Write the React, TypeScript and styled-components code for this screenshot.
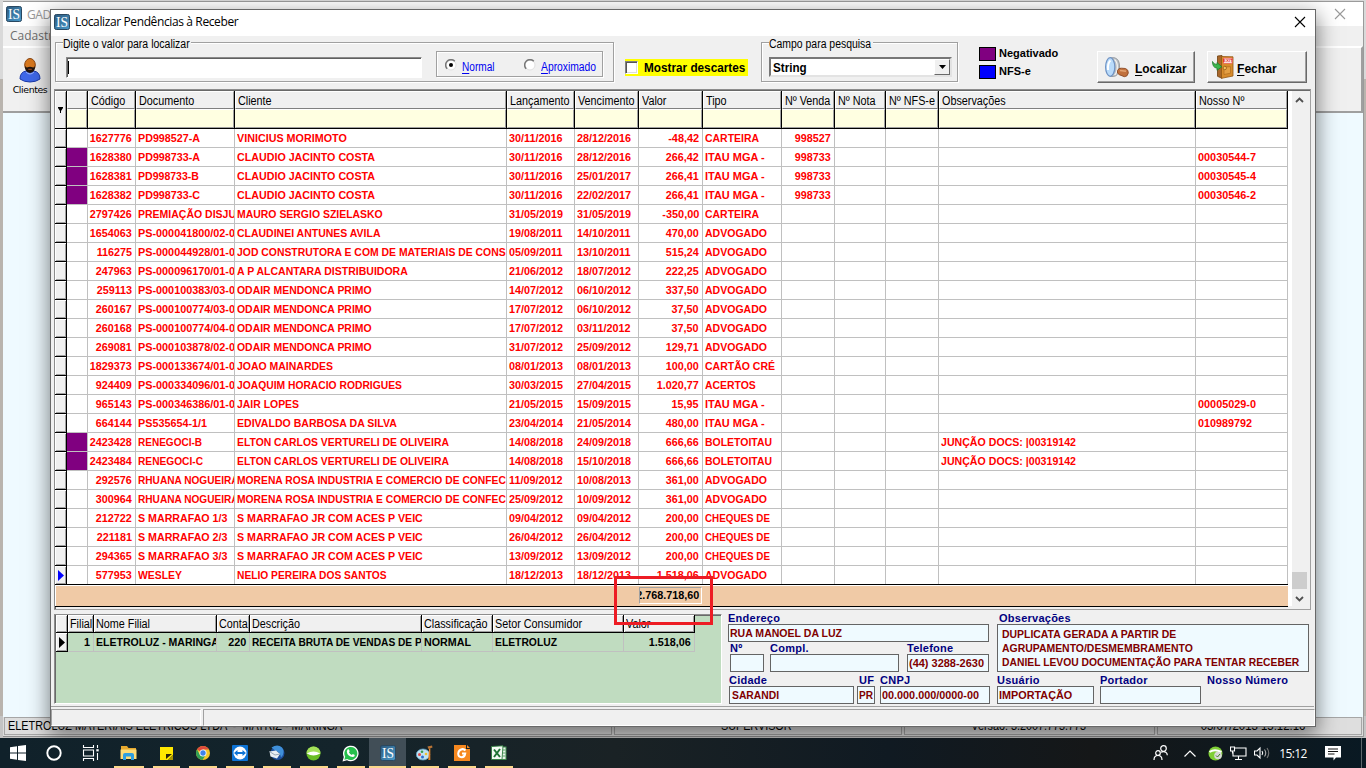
import React from "react";
import styled, { createGlobalStyle, css } from "styled-components";

const Global = createGlobalStyle`
  * { box-sizing: border-box; }
  body { margin: 0; background: #b7b3ad; overflow: hidden; }
  #root { font-family: "Liberation Sans", Arial, sans-serif; font-size: 11px; color: #000; }
`;

const Desktop = styled.div`
  position: relative;
  width: 1366px;
  height: 768px;
  overflow: hidden;
  background: linear-gradient(#d9d9d9 0 79px, #b9b4ae 79px 716px, #c4c4c4 716px);
`;

/* ---------- shared text ---------- */
const Narrow = styled.span<{ $sx?: number }>`
  display: inline-block;
  font-size: 12px;
  white-space: pre;
  transform: scaleX(${(p) => p.$sx ?? 0.9});
  transform-origin: 0 50%;
`;
const Under = styled.u`
  text-decoration: underline;
  text-underline-offset: 2px;
`;

/* ---------- main window ---------- */
const MainWindow = styled.div`
  position: absolute;
  left: 3px;
  top: 1px;
  width: 1361px;
  height: 736px;
  display: flex;
  flex-direction: column;
  background: #effaff;
  border-top: 1px solid #9b9b9b;
  border-right: 1px solid #9a9a9a;
`;
const MainTitle = styled.div`
  height: 24px;
  flex: none;
  display: flex;
  align-items: center;
  padding: 0 17px 0 3px;
  gap: 5px;
  background: #fff;
  color: #999;
  font-family: "Open Sans", "Noto Sans", sans-serif;
  font-size: 12px;
  letter-spacing: -0.38px;
  white-space: pre;
  & > :last-child { margin-left: auto; }
`;
const MainMenu = styled.div`
  height: 20px;
  flex: none;
  padding: 0 7px;
  font: 12px/20px "Open Sans", "Noto Sans", sans-serif;
  color: #6d6d6d;
  background: #f0f0f0;
`;
const MainToolbar = styled.div`
  height: 67px;
  flex: none;
  border-top: 2px solid #fff;
  border-bottom: 2px solid #9f9f9f;
  border-right: 2px solid #9f9f9f;
  background: #f0f0f0;
`;
const ToolItem = styled.div`
  width: 54px;
  display: flex;
  flex-direction: column;
  align-items: center;
  padding-top: 9px;
  font: 9.4px/13px "DejaVu Sans", sans-serif;
  letter-spacing: -0.4px;
  svg { display: block; margin-bottom: 0; }
`;
const MainStatus = styled.div`
  height: 20px;
  flex: none;
  margin-top: auto;
  display: flex;
  gap: 2px;
  padding: 0 1px 0 1px;
  background: #dcdcdc;
  border-bottom: 1px solid #8f8f8f;
`;
const MainPane = styled.div<{ $w: number; $left?: boolean; $pr?: number }>`
  width: ${(p) => p.$w}px;
  flex: none;
  border: 1px solid #a6a6a6;
  height: 18px;
  font-size: 12px;
  line-height: 17px;
  padding-left: 3px;
  padding-right: ${(p) => p.$pr ?? 0}px;
  text-align: ${(p) => (p.$left ? "left" : "center")};
  white-space: pre;
  background: #dedede;
  span { transform-origin: ${(p) => (p.$left ? "0 50%" : "50% 50%")}; }
`;

/* ---------- dialog ---------- */
const Dialog = styled.div`
  position: absolute;
  left: 50px;
  top: 9px;
  width: 1266px;
  height: 718px;
  border: 1px solid #686868;
  background: #f0f0f0;
  box-shadow: 0 7px 20px 1px rgba(0, 0, 0, 0.5);
  display: flex;
  flex-direction: column;
`;
const DialogTitle = styled.div`
  height: 26px;
  flex: none;
  background: #fff;
  display: flex;
  align-items: center;
  padding: 0 9px 3px 3px;
  gap: 5px;
  font: 12px "Open Sans", "Noto Sans", sans-serif;
  letter-spacing: -0.38px;
  & > svg:last-child { margin-left: auto; }
`;
const SearchBar = styled.div`
  height: 53px;
  flex: none;
  display: flex;
  align-items: flex-start;
  padding: 6px 0 0 4px;
`;
const Group = styled.div<{ $w: number; $gap: number }>`
  position: relative;
  width: ${(p) => p.$w}px;
  flex: none;
  height: 40px;
  margin-right: ${(p) => p.$gap}px;
  border: 1px solid #a0a0a0;
  box-shadow: 1px 1px 0 #fff, inset 1px 1px 0 #fff;
  display: flex;
  align-items: flex-start;
  padding: 14px 0 0 ${(p) => (p.$w > 300 ? 10 : 7)}px;
`;
const Legend = styled.div<{ $w: number }>`
  position: absolute;
  left: 7px;
  top: -6px;
  width: ${(p) => p.$w}px;
  height: 14px;
  line-height: 14px;
  background: #f0f0f0;
  white-space: nowrap;
`;
const TextBox = styled.div`
  width: 356px;
  flex: none;
  height: 21px;
  background: #fff;
  border: 1px solid;
  border-color: #8a8a8a #fff #fff #8a8a8a;
  box-shadow: inset 1px 1px 0 #606060;
  padding: 3px 0 0 1px;
`;
const Caret = styled.div`
  width: 1px;
  height: 13px;
  background: #000;
`;
const RadioGroup = styled.div`
  width: 167px;
  flex: none;
  height: 26px;
  margin: -6px 0 0 14px;
  border: 1px solid #a0a0a0;
  box-shadow: 1px 1px 0 #fff, inset 1px 1px 0 #fff;
  display: flex;
  align-items: center;
  padding: 5px 0 0 8px;
  color: #0000f0;
`;
const RadioItem = styled.div<{ $w: number }>`
  width: ${(p) => p.$w}px;
  flex: none;
  display: flex;
  align-items: center;
  gap: 5px;
  white-space: nowrap;
  svg { margin-top: -3px; flex: none; }
`;
const CheckItem = styled.div`
  width: 123px;
  height: 17px;
  flex: none;
  margin: 17px 13px 0 0;
  background: #ffff00;
  display: flex;
  align-items: center;
  gap: 6px;
  font-weight: bold;
`;
const CheckBox = styled.div`
  width: 13px;
  height: 13px;
  flex: none;
  background: #fff;
  border: 1px solid;
  border-color: #808080 #fff #fff #808080;
  box-shadow: inset 1px 1px 0 #555, inset -1px -1px 0 #ddd;
`;
const Select = styled.div`
  width: 183px;
  flex: none;
  height: 20px;
  background: #fff;
  border: 2px solid;
  border-color: #777 #e3e3e3 #e3e3e3 #777;
  display: flex;
  align-items: center;
  justify-content: space-between;
  padding-left: 2px;
  font-weight: bold;
  span { margin-top: 2px; }
`;
const DropButton = styled.div`
  width: 16px;
  height: 16px;
  background: #f0f0f0;
  border: 1px solid;
  border-color: #fff #696969 #696969 #fff;
  display: grid;
  place-items: center;
`;
const ColorLegend = styled.div`
  width: 118px;
  flex: none;
  padding-top: 4px;
  display: flex;
  flex-direction: column;
  gap: 5px;
`;
const ColorItem = styled.div<{ $c: string }>`
  height: 13px;
  display: flex;
  align-items: center;
  gap: 3px;
  font-weight: bold;
  line-height: 12px;
  &::before {
    content: "";
    width: 15px;
    height: 12px;
    margin-top: 2px;
    border: 1px solid #000;
    background: ${(p) => p.$c};
  }
`;
const ActionButton = styled.div<{ $w: number; $pl: number; $gap: number }>`
  width: ${(p) => p.$w}px;
  height: 32px;
  margin: 9px ${(p) => 110 - p.$w}px 0 0;
  flex: none;
  border: 1px solid;
  border-color: #fff #696969 #696969 #fff;
  box-shadow: inset -1px -1px 0 #a0a0a0;
  display: flex;
  align-items: center;
  padding-left: ${(p) => p.$pl}px;
  gap: ${(p) => p.$gap}px;
  font-weight: bold;
  span { font-size: 13px; margin-top: 2px; }
`;

/* ---------- grids ---------- */
const GridPanel = styled.div`
  height: 521px;
  flex: none;
  margin: 0 4px 0 3px;
  border: 1px solid #8d8d8d;
  border-right-color: #a0a0a0;
  box-shadow: inset 1px 1px 0 #696969;
  display: flex;
  padding: 1px 3px 3px 0;
  border-bottom-color: #a0a0a0;
`;
const GridMain = styled.div`
  width: 1233px;
  flex: none;
  display: flex;
  flex-direction: column;
`;
const HeadRow = styled.div`
  display: flex;
  height: 38px;
  flex: none;
  border-bottom: 1px solid #000;
`;
const HeadCell = styled.div<{ $w: number }>`
  width: ${(p) => p.$w}px;
  flex: none;
  border-right: 1px solid #000;
  display: flex;
  flex-direction: column;
`;
const HeadText = styled.div`
  height: 18px;
  flex: none;
  overflow: hidden;
  padding-left: 2px;
  line-height: 18px;
  background: #f0f0f0;
  border: 1px solid;
  border-color: #fff #a0a0a0 #808080 #fff;
  span { line-height: 18px; }
`;
const FilterBox = styled.div`
  flex: 1;
  background: #ffffe1;
  border: 1px solid;
  border-color: #fff #a0a0a0 #a0a0a0 #ffffe1;
`;
const FilterHandle = styled.div`
  width: 12px;
  flex: none;
  border-right: 1px solid #000;
  display: grid;
  place-items: center;
  background: #f0f0f0;
  box-shadow: inset 1px 1px 0 #fff, inset -1px 0 0 #a0a0a0;
`;
const Row = styled.div<{ $c: string; $last?: boolean }>`
  display: flex;
  height: ${(p) => (p.$last ? 18 : 19)}px;
  flex: none;
  color: ${(p) => p.$c};
  font-weight: bold;
`;
const RowMark = styled.div<{ $last?: boolean }>`
  width: 12px;
  flex: none;
  background: #f0f0f0;
  border-right: 1px solid #000;
  border-bottom: ${(p) => (p.$last ? 0 : 1)}px solid #000;
  box-shadow: inset 1px 1px 0 #fff, inset -1px -1px 0 #a0a0a0;
  display: grid;
  place-items: center;
`;
const Cell = styled.div<{ $w: number; $right?: boolean; $fill?: string; $last?: boolean }>`
  width: ${(p) => p.$w}px;
  flex: none;
  overflow: hidden;
  white-space: pre;
  line-height: 18px;
  padding: 0 ${(p) => (p.$right ? 3 : 0)}px 0 2px;
  display: flex;
  justify-content: ${(p) => (p.$right ? "flex-end" : "flex-start")};
  background: ${(p) => p.$fill ?? "#fff"};
  border-right: 1px solid #c0c0c0;
  border-bottom: ${(p) => (p.$last ? 0 : 1)}px solid #c0c0c0;
`;
const GridFooter = styled.div`
  height: 23px;
  flex: none;
  border-top: 1px solid #000;
  border-bottom: 1px solid #000;
  background: #f0caa6;
  box-shadow: inset 1px 1px 0 #fff;
  padding: 2px 0 0 584px;
`;
const Total = styled.div`
  width: 63px;
  height: 17px;
  border: 1px solid;
  border-color: #a0a0a0 #fff #fff #a0a0a0;
  overflow: hidden;
  display: flex;
  justify-content: flex-end;
  padding-right: 2px;
  font-weight: bold;
  line-height: 15px;
`;
const GridGap = styled.div`
  width: 4px;
  background: #fff;
`;
const ScrollBar = styled.div`
  width: 16px;
  display: flex;
  flex-direction: column;
  align-items: center;
  padding: 6px 0 4px;
  background: #f0f0f0;
`;
const Thumb = styled.div`
  width: 15px;
  height: 17px;
  margin: auto 0 7px;
  background: #cdcdcd;
`;

/* ---------- lower half ---------- */
const Lower = styled.div`
  height: 97px;
  flex: none;
  margin-right: 1px;
  border-bottom: 1px solid #a0a0a0;
  display: flex;
  padding: 4px 0 0 3px;
`;
const DetailGrid = styled.div`
  width: 668px;
  height: 90px;
  flex: none;
  background: #c0dcc0;
  border: 1px solid;
  border-color: #8d8d8d #fff #fff #8d8d8d;
  box-shadow: inset 1px 1px 0 #696969;
  padding: 0 0 0 1px;
`;
const DetailHead = styled.div`
  display: flex;
  height: 18px;
`;
const DetailHeadCell = styled.div<{ $w: number }>`
  width: ${(p) => p.$w}px;
  flex: none;
  height: 18px;
  overflow: hidden;
  line-height: 18px;
  padding-left: 2px;
  background: #f0f0f0;
  border-right: 1px solid #000;
  border-bottom: 1px solid #000;
  box-shadow: inset 1px 1px 0 #fff, inset -1px -1px 0 #a0a0a0;
`;
const Form = styled.div`
  flex: 1;
  display: flex;
  margin-top: -1px;
  padding: 0 0 0 6px;
`;
const FormLeft = styled.div`
  width: 269px;
  flex: none;
`;
const FormRight = styled.div`
  flex: 1;
`;
const FieldRow = styled.div<{ $h: number; $pl?: number }>`
  height: ${(p) => p.$h}px;
  display: flex;
  padding-left: ${(p) => p.$pl ?? 0}px;
`;
const Field = styled.div<{ $w: number; $gap?: number }>`
  width: ${(p) => p.$w}px;
  margin-right: ${(p) => p.$gap ?? 0}px;
  flex: none;
`;
const FieldLabel = styled.div<{ $pl?: number }>`
  height: 11px;
  line-height: 11px;
  padding-left: ${(p) => p.$pl ?? 0}px;
  color: #000080;
  font-weight: bold;
  letter-spacing: 0.25px;
  white-space: nowrap;
`;
const FieldBox = styled.div<{ $h?: number; $pl?: number }>`
  height: ${(p) => p.$h ?? 18}px;
  border: 1px solid #646464;
  background: #effaff;
  color: #800000;
  font-weight: bold;
  padding: ${(p) => (p.$h ? 2 : 1)}px 0 0 ${(p) => p.$pl ?? 1}px;
  line-height: 14px;
  white-space: pre;
  overflow: hidden;
`;
const Fit = styled.span<{ $sx: number; $right?: boolean }>`
  display: block;
  flex: none;
  width: max-content;
  transform: scaleX(${(p) => p.$sx});
  transform-origin: ${(p) => (p.$right ? "100%" : "0")} 50%;
`;
const DialogStatus = styled.div`
  flex: 1;
  display: flex;
  gap: 2px;
  padding-top: 2px;
`;
const StatusPane = styled.div<{ $w?: number }>`
  ${(p) => (p.$w ? css`width: ${p.$w}px;` : css`flex: 1;`)}
  border: 1px solid;
  border-color: #a0a0a0 #fff #fff #a0a0a0;
`;
const Highlight = styled.div`
  position: absolute;
  left: 614px;
  top: 576px;
  width: 99px;
  height: 49px;
  border: 3px solid #ed1c24;
`;

/* ---------- taskbar ---------- */
const Taskbar = styled.div`
  position: absolute;
  left: 0;
  right: 0;
  bottom: 0;
  height: 30px;
  display: flex;
  background: linear-gradient(90deg, #10212a, #14242b 25%, #1a2225 45%, #101a22 65%, #151718 80%, #091923);
`;
const Task = styled.div<{ $w: number; $open?: boolean; $active?: boolean }>`
  width: ${(p) => p.$w}px;
  flex: none;
  display: grid;
  place-items: center;
  background: ${(p) => (p.$active ? "#414e57" : "none")};
  position: relative;
  ${(p) =>
    p.$open &&
    css`
      &::after {
        content: "";
        position: absolute;
        bottom: 0;
        left: ${p.$active ? 0 : 5}px;
        right: ${p.$active ? 0 : 4}px;
        height: 2px;
        background: #fbd88b;
      }
    `}
`;
const Tray = styled.div`
  margin-left: auto;
  display: flex;
  align-items: center;
  color: #fff;
  svg { flex: none; }
`;
const TrayItem = styled.div<{ $w: number }>`
  width: ${(p) => p.$w}px;
  height: 30px;
  display: grid;
  place-items: center;
`;
const Clock = styled.div`
  width: 40px;
  text-align: center;
  font: 12px "Open Sans", sans-serif;
  letter-spacing: -0.65px;
`;
const PeekLine = styled.div`
  width: 5px;
  height: 30px;
  border-left: 1px solid #5c676c;
`;

/* ---------- drawings ---------- */
const AppIcon = ({ size = 16 }: { size?: number }) => (
  <svg width={size} height={size} viewBox="0 0 16 16">
    <defs>
      <linearGradient id="isg" x1="0" y1="0" x2="1" y2="1">
        <stop offset="0" stopColor="#2c587d" />
        <stop offset="1" stopColor="#4a9bcb" />
      </linearGradient>
    </defs>
    <rect x=".5" y=".5" width="15" height="15" rx="1.8" fill="url(#isg)" stroke="#294861" />
    <text x="8" y="12.8" fontSize="14" textAnchor="middle" textLength="12" lengthAdjust="spacingAndGlyphs" fill="#fff" fontFamily="Liberation Serif, serif" letterSpacing="0">IS</text>
  </svg>
);
const Cross = ({ color }: { color: string }) => (
  <svg width="12" height="12" viewBox="0 0 12 12">
    <path d="M1 1l10 10M11 1L1 11" stroke={color} strokeWidth="1.1" />
  </svg>
);
const Person = () => (
  <svg width="22" height="26" viewBox="0 0 22 26">
    <path d="M1 22q0-7 6-8h8q6 1 6 8-4 3-10 3T1 22z" fill="#3f68e8" stroke="#1c3aa8" />
    <path d="M7 15q4 4 8 0" fill="none" stroke="#9ab4ff" />
    <ellipse cx="11" cy="8" rx="5.3" ry="6.5" fill="#d8781e" stroke="#8a4510" />
    <path d="M6 9q1.500 2 2.500 1.200 2.500-.7 5 0Q15 11 16 9q.3 6-5 7-5.300-1-5-7z" fill="#20140e" />
    <path d="M9.300 12.300h3.500" stroke="#a34c26" />
  </svg>
);
const Radio = ({ on }: { on?: boolean }) => (
  <svg width="12" height="12" viewBox="0 0 12 12">
    <circle cx="6" cy="6" r="5" fill="#fff" stroke="#e0e0e0" />
    <path d="M2.200 9.800A5.300 5.300 0 0 1 9.800 2.200" fill="none" stroke="#777" strokeWidth="1.500" />
    {on && <circle cx="6" cy="6" r="2" fill="#000" />}
  </svg>
);
const Down = () => (
  <svg width="7" height="4" viewBox="0 0 7 4"><path d="M0 0h7L3.500 4z" fill="#000" /></svg>
);
const FilterMark = () => (
  <svg width="5" height="6" viewBox="0 0 5 6"><path d="M0 0h5v1L3 4v2H2V4L0 1z" fill="#000" /></svg>
);
const Pointer = ({ color }: { color: string }) => (
  <svg width="6" height="11" viewBox="0 0 6 11"><path d="M0 0l6 5.500L0 11z" fill={color} /></svg>
);
const Chevron = ({ up }: { up?: boolean }) => (
  <svg width="9" height="6" viewBox="0 0 9 6">
    <path d={up ? "M1 5l3.500-3.500L8 5" : "M1 1l3.500 3.500L8 1"} fill="none" stroke="#505050" strokeWidth="1.800" />
  </svg>
);
const Magnifier = () => (
  <svg width="24" height="21" viewBox="0 0 24 21">
    <path d="M5 .7h4.500q5.500 1.500 5 9.800-.5 8.500-6 9H5z" fill="#b9bec3" stroke="#8a8f95" strokeWidth=".8" />
    <path d="M9.500 2.500q3 2.500 2.800 8T9.500 18" fill="none" stroke="#f2f2f2" strokeWidth="1.300" />
    <ellipse cx="5.200" cy="10" rx="4.600" ry="9.300" fill="#b9dbfb" stroke="#6f93c4" strokeWidth="1.200" />
    <path d="M3 13q-.5-7 2.500-9.500" fill="none" stroke="#fff" strokeWidth="2" />
    <path d="M12.500 13.500q1.500-3 4-2.300l4 .3q3 1 2.800 4.500-.6 3.700-4 3.700l-5-2q-2.500-1.200-1.800-4.200z" fill="#c1713d" stroke="#8b4a25" strokeWidth=".9" />
    <path d="M15 13.500l6 .8" stroke="#e3a473" strokeWidth="1.500" />
  </svg>
);
const ExitDoor = () => (
  <svg width="22" height="24" viewBox="0 0 22 24">
    <path d="M5.500 1L10 .5v22.800l-4.500-2z" fill="#a8672a" stroke="#6e3d0d" strokeWidth=".8" />
    <path d="M9.500 1.500L21 1.800V21l-11.500 2.300z" fill="#d78b2b" stroke="#925512" strokeWidth=".8" />
    <path d="M12 12l6.500-.3v6.500L12 19.500z" fill="#e39e42" stroke="#b06c1c" strokeWidth=".7" />
    <rect x="11.500" y="3.200" width="8.600" height="5" fill="#fff" stroke="#ee5a5a" strokeWidth=".8" />
    <text x="15.800" y="7.400" fontSize="4.300" fontWeight="bold" textAnchor="middle" fill="#e02020">EXIT</text>
    <circle cx="12.800" cy="13" r="1.700" fill="#f7c45a" stroke="#8c5212" strokeWidth=".7" />
    <path d="M.5 6.500q1 3 4.500 3V7.500l4.800 4.300L5 15.300v-2.300Q.5 13 .5 6.500z" fill="#3bb54a" stroke="#1c7c2c" strokeWidth=".8" />
  </svg>
);

const taskIcons: { w: number; open?: boolean; active?: boolean; icon: React.ReactNode }[] = [
  { w: 36, icon: <svg width="16" height="16" viewBox="0 0 16 16"><path d="M0 2.300L7 1.300v6.200H0zM8 1.100L16 0v7.500H8zM0 8.500h7v6.200l-7-1zM8 8.500h8V16l-8-1.100z" fill="#fff" /></svg> },
  { w: 36, icon: <svg width="16" height="16" viewBox="0 0 16 16"><circle cx="8" cy="8" r="6.700" fill="none" stroke="#fff" strokeWidth="1.900" /></svg> },
  { w: 37, icon: <svg width="17" height="16" viewBox="0 0 17 16" fill="none" stroke="#fff" strokeWidth="1.100"><path d="M1.500 0v2.500h10V0M1.500 16v-2.500h10V16M1.500 5h10v6h-10zM15.500 0v3M15.500 8v7" /><path d="M14.300 5.300h2.400" strokeWidth="2.200" /></svg> },
  { w: 39, open: true, icon: <svg width="17" height="16" viewBox="0 0 17 16"><path d="M1 1h6l1.500 2H16v4H1z" fill="#e6a92e" /><path d="M.5 4.500h16V14H.5z" fill="#ffdc76" /><path d="M3 15V10q0-2 2-2h7q2 0 2 2v5h-3v-3.500H6V15z" fill="#2f9fe0" /></svg> },
  { w: 36, open: true, icon: <svg width="13" height="13" viewBox="0 0 13 13"><path d="M0 0h13v8l-5 5H0z" fill="#ffe800" /><path d="M6 12V7h6z" fill="#29250b" /><path d="M13 8v5H8z" fill="#a89500" /></svg> },
  { w: 37, open: true, icon: <svg width="16" height="16" viewBox="0 0 16 16"><circle cx="8" cy="8" r="7" fill="#f4c727" /><path d="M8 8L2 4.500A7 7 0 0 1 14 4.500H8z" fill="#e04a3c" /><path d="M2 4.500A7 7 0 0 0 7.500 15L11 9.500 5 10z" fill="#2f9f56" /><circle cx="8" cy="8" r="3.500" fill="#fff" /><circle cx="8" cy="8" r="2.700" fill="#3f83ea" /></svg> },
  { w: 37, open: true, icon: <svg width="16" height="16" viewBox="0 0 16 16"><rect width="16" height="16" rx="1" fill="#0e74d6" /><circle cx="8" cy="8" r="6.500" fill="#fff" /><path d="M2 8l3.500-3v2h5V5L14 8l-3.500 3V9h-5v2z" fill="#0e74d6" /></svg> },
  { w: 37, open: true, icon: <svg width="17" height="16" viewBox="0 0 17 16"><circle cx="9.500" cy="8" r="7" fill="#1f4f9c" /><path d="M3.500 2.500q6-4 10.500 0 3.500 5-1 10-1-6-6-7z" fill="#3f8fd8" /><path d="M1.500 6.500l6.500-1 4 3.500-3 4.500-6.500-2z" fill="#e9edf2" /><path d="M1.500 6.500L7 10l5-1" fill="none" stroke="#9aa7b5" /></svg> },
  { w: 37, open: true, icon: <svg width="15" height="15" viewBox="0 0 15 15"><circle cx="7.500" cy="7.500" r="7" fill="#69bd25" /><path d="M.5 7.500a7 7 0 0 1 14 0z" fill="#a4e15a" /><path d="M.8 7.500q6.700-4 13.400 0-6.700 4-13.400 0z" fill="#fff" /></svg> },
  { w: 37, open: true, icon: <svg width="17" height="17" viewBox="0 0 17 17"><path d="M.5 16.500L1.800 12A7.800 7.800 0 1 1 5 15.300z" fill="#fff" /><path d="M2.300 14.700l.9-3A6.500 6.500 0 1 1 5.300 13.900z" fill="#25c04c" /><path d="M5.500 4.500l1.200-.2 1 2-.8 1q1 2 3 2.600l.9-1 2 1q0 2-2 2.200-5.600-.8-6-5.600z" fill="#fff" /></svg> },
  { w: 37, open: true, active: true, icon: <AppIcon size={16} /> },
  { w: 37, open: true, icon: <svg width="17" height="16" viewBox="0 0 17 16"><ellipse cx="7" cy="9.500" rx="6.700" ry="5.500" fill="#bfe2f3" stroke="#5c9fc3" strokeWidth=".8" /><circle cx="3.500" cy="9.500" r="1.500" fill="#e04848" /><circle cx="6" cy="6.700" r="1.300" fill="#3c9c4c" /><circle cx="6.500" cy="12" r="1.500" fill="#2d6fd0" /><circle cx="10" cy="9" r="1.300" fill="#f0c030" /><path d="M13 3.500L12.300 15h2L14.300 3.500z" fill="#e88324" /><path d="M11.500 1.500l4.500-1 .5 2-4 1.500z" fill="#b87436" /></svg> },
  { w: 37, open: true, icon: <svg width="16" height="16" viewBox="0 0 16 16"><path d="M0 0h12v4h4v12H0z" fill="#f6881f" /><path d="M13 0l3 3h-3z" fill="#f6881f" /><path d="M11.500 5.500Q10 3.800 7.800 4.200 4.500 5 4.200 8.500q0 3.500 3.500 3.700 3 0 3.500-3.700H8" fill="none" stroke="#fff" strokeWidth="2" /></svg> },
  { w: 37, open: true, icon: <svg width="16" height="16" viewBox="0 0 16 16"><rect x="4" y="2" width="11" height="12.500" fill="#e7f1e7" stroke="#3e8b4e" /><path d="M11.500 5h3M11.500 8h3M11.500 11h3" stroke="#59a768" /><path d="M.5 1.500L12 .8 11 14.500H.5z" fill="#f3faf3" stroke="#2c7a3c" strokeWidth=".9" /><path d="M3 4.500l6 7.500M9 4l-6 8" stroke="#1e7434" strokeWidth="2" /></svg> },
];

/* ---------- text fitting ---------- */
// Whole-pixel advances of the grid's bold 11px face, beside the outline font's own advances.
const pixelAdvance: Record<string, number> = {
  A: 8, Ã: 8, B: 7, C: 8, Ç: 8, D: 7, E: 6, F: 6, G: 8, H: 7, I: 3, J: 6, L: 7, M: 10, N: 7, O: 8, Õ: 8, P: 7,
  Q: 8, R: 7, S: 7, T: 7, U: 7, V: 8, W: 11, Y: 7, Z: 7, " ": 3, "-": 4, ".": 3, ",": 3, "/": 3, "(": 4, ")": 4, ":": 4, "|": 3,
};
const outlineAdvance: Record<string, number> = {
  A: 0.722, Ã: 0.722, B: 0.722, C: 0.722, Ç: 0.722, D: 0.722, E: 0.667, É: 0.667, F: 0.611, G: 0.778, H: 0.722, I: 0.278,
  J: 0.556, L: 0.611, M: 0.833, N: 0.722, O: 0.778, Õ: 0.778, P: 0.667, Q: 0.778, R: 0.722, S: 0.667, T: 0.611,
  U: 0.722, V: 0.667, W: 0.944, Y: 0.667, Z: 0.611, " ": 0.278, "-": 0.333, ".": 0.278, ",": 0.278, "/": 0.278,
  "(": 0.333, ")": 0.333, ":": 0.333, "|": 0.28,
};
const ratio = (text: string) => {
  let pixels = 0;
  let outline = 0;
  for (const ch of text) {
    pixels += pixelAdvance[ch] ?? 6;
    outline += (outlineAdvance[ch] ?? 0.556) * 11;
  }
  return outline ? Math.round((pixels / outline) * 1000) / 1000 : 1;
};
const Fitted = ({ children, right }: { children: string; right?: boolean }) =>
  children ? <Fit $sx={ratio(children)} $right={right}>{children}</Fit> : null;

/* ---------- data ---------- */
const cols: [string, number][] = [
  ["", 21], ["Código", 48], ["Documento", 99], ["Cliente", 272], ["Lançamento", 68], ["Vencimento", 64],
  ["Valor", 64], ["Tipo", 79], ["Nº Venda", 53], ["Nº Nota", 51], ["Nº NFS-e", 53], ["Observações", 257], ["Nosso Nº", 92],
];
const rightAligned = [1, 6, 8];

type Entry = [string, string, string, string, string, string, string, string?, string?, string?];
const entries: Entry[] = [
  ["1627776", "PD998527-A", "VINICIUS MORIMOTO", "30/11/2016", "28/12/2016", "-48,42", "CARTEIRA", "998527"],
  ["1628380", "PD998733-A", "CLAUDIO JACINTO COSTA", "30/11/2016", "28/12/2016", "266,42", "ITAU MGA -", "998733", "", "00030544-7"],
  ["1628381", "PD998733-B", "CLAUDIO JACINTO COSTA", "30/11/2016", "25/01/2017", "266,41", "ITAU MGA -", "998733", "", "00030545-4"],
  ["1628382", "PD998733-C", "CLAUDIO JACINTO COSTA", "30/11/2016", "22/02/2017", "266,41", "ITAU MGA -", "998733", "", "00030546-2"],
  ["2797426", "PREMIAÇÃO DISJU", "MAURO SERGIO SZIELASKO", "31/05/2019", "31/05/2019", "-350,00", "CARTEIRA"],
  ["1654063", "PS-000041800/02-0", "CLAUDINEI ANTUNES AVILA", "19/08/2011", "14/10/2011", "470,00", "ADVOGADO"],
  ["116275", "PS-000044928/01-0", "JOD CONSTRUTORA E COM DE MATERIAIS DE CONS", "05/09/2011", "13/10/2011", "515,24", "ADVOGADO"],
  ["247963", "PS-000096170/01-0", "A P ALCANTARA DISTRIBUIDORA", "21/06/2012", "18/07/2012", "222,25", "ADVOGADO"],
  ["259113", "PS-000100383/03-0", "ODAIR MENDONCA PRIMO", "14/07/2012", "06/10/2012", "337,50", "ADVOGADO"],
  ["260167", "PS-000100774/03-0", "ODAIR MENDONCA PRIMO", "17/07/2012", "06/10/2012", "37,50", "ADVOGADO"],
  ["260168", "PS-000100774/04-0", "ODAIR MENDONCA PRIMO", "17/07/2012", "03/11/2012", "37,50", "ADVOGADO"],
  ["269081", "PS-000103878/02-0", "ODAIR MENDONCA PRIMO", "31/07/2012", "25/09/2012", "129,71", "ADVOGADO"],
  ["1829373", "PS-000133674/01-0", "JOAO MAINARDES", "08/01/2013", "08/01/2013", "100,00", "CARTÃO CRÉ"],
  ["924409", "PS-000334096/01-0", "JOAQUIM HORACIO RODRIGUES", "30/03/2015", "27/04/2015", "1.020,77", "ACERTOS"],
  ["965143", "PS-000346386/01-0", "JAIR LOPES", "21/05/2015", "15/09/2015", "15,95", "ITAU MGA -", "", "", "00005029-0"],
  ["664144", "PS535654-1/1", "EDIVALDO BARBOSA DA SILVA", "23/04/2014", "21/05/2014", "480,00", "ITAU MGA -", "", "", "010989792"],
  ["2423428", "RENEGOCI-B", "ELTON CARLOS VERTURELI DE OLIVEIRA", "14/08/2018", "24/09/2018", "666,66", "BOLETOITAU", "", "JUNÇÃO DOCS: |00319142"],
  ["2423484", "RENEGOCI-C", "ELTON CARLOS VERTURELI DE OLIVEIRA", "14/08/2018", "15/10/2018", "666,66", "BOLETOITAU", "", "JUNÇÃO DOCS: |00319142"],
  ["292576", "RHUANA NOGUEIRA", "MORENA ROSA INDUSTRIA E COMERCIO DE CONFEC", "11/09/2012", "10/08/2013", "361,00", "ADVOGADO"],
  ["300964", "RHUANA NOGUEIRA", "MORENA ROSA INDUSTRIA E COMERCIO DE CONFEC", "25/09/2012", "10/09/2012", "361,00", "ADVOGADO"],
  ["212722", "S MARRAFAO 1/3", "S MARRAFAO JR COM ACES P VEIC", "09/04/2012", "09/04/2012", "200,00", "CHEQUES DE"],
  ["221181", "S MARRAFAO 2/3", "S MARRAFAO JR COM ACES P VEIC", "26/04/2012", "26/04/2012", "200,00", "CHEQUES DE"],
  ["294365", "S MARRAFAO 3/3", "S MARRAFAO JR COM ACES P VEIC", "13/09/2012", "13/09/2012", "200,00", "CHEQUES DE"],
  ["577953", "WESLEY", "NELIO PEREIRA DOS SANTOS", "18/12/2013", "18/12/2013", "1.518,06", "ADVOGADO"],
];
const negative = [1, 2, 3, 16, 17];

const detail: [string, number, string, boolean?][] = [
  ["Filial", 26, "1", true], ["Nome Filial", 123, "ELETROLUZ - MARINGA"], ["Conta", 33, "220", true],
  ["Descrição", 172, "RECEITA BRUTA DE VENDAS DE P"], ["Classificação", 71, "NORMAL"],
  ["Setor Consumidor", 131, "ELETROLUZ"], ["Valor", 71, "1.518,06", true],
];

export default function App() {
  return (
    <>
      <Global />
      <Desktop>
        <MainWindow>
          <MainTitle>
            <AppIcon />
            GADM - Comercial e Administrativo - Versão: 3.2007.773.773
            <Cross color="#999" />
          </MainTitle>
          <MainMenu>Cadastros</MainMenu>
          <MainToolbar>
            <ToolItem><Person />Clientes</ToolItem>
          </MainToolbar>
          <MainStatus>
            <MainPane $w={608} $left><Narrow $sx={0.905}>ELETROLUZ MATERIAIS ELETRICOS LTDA  -  MATRIZ - MARINGA</Narrow></MainPane>
            <MainPane $w={288} $pr={6}><Narrow>SUPERVISOR</Narrow></MainPane>
            <MainPane $w={251} $pr={4}><Narrow>Versão: 3.2007.773.773</Narrow></MainPane>
            <MainPane $w={205} $pr={16}><Narrow $sx={0.95}>03/07/2013 15:12:16</Narrow></MainPane>
          </MainStatus>
        </MainWindow>

        <Dialog>
          <DialogTitle>
            <AppIcon />
            Localizar Pendências à Receber
            <Cross color="#000" />
          </DialogTitle>

          <SearchBar>
            <Group $w={559} $gap={11}>
              <Legend $w={128}><Narrow $sx={0.875}>Digite o valor para localizar</Narrow></Legend>
              <TextBox><Caret /></TextBox>
              <RadioGroup>
                <RadioItem $w={79}><Radio on /><Narrow $sx={0.84}><Under>N</Under>ormal</Narrow></RadioItem>
                <RadioItem $w={76}><Radio /><Narrow $sx={0.86}><Under>A</Under>proximado</Narrow></RadioItem>
              </RadioGroup>
            </Group>
            <CheckItem><CheckBox /><Narrow $sx={0.98}>Mostrar descartes</Narrow></CheckItem>
            <Group $w={197} $gap={21}>
              <Legend $w={104}><Narrow $sx={0.87}>Campo para pesquisa</Narrow></Legend>
              <Select><Narrow $sx={0.97}>String</Narrow><DropButton><Down /></DropButton></Select>
            </Group>
            <ColorLegend>
              <ColorItem $c="#800080">Negativado</ColorItem>
              <ColorItem $c="#0000ff">NFS-e</ColorItem>
            </ColorLegend>
            <ActionButton $w={98} $pl={7} $gap={6}><Magnifier /><Narrow $sx={0.915}><Under>L</Under>ocalizar</Narrow></ActionButton>
            <ActionButton $w={100} $pl={4} $gap={3}><ExitDoor /><Narrow $sx={0.93}><Under>F</Under>echar</Narrow></ActionButton>
          </SearchBar>

          <GridPanel>
            <GridMain>
              <HeadRow>
                <FilterHandle><FilterMark /></FilterHandle>
                {cols.map(([name, w], i) => (
                  <HeadCell key={i} $w={w}>
                    <HeadText><Narrow>{name}</Narrow></HeadText>
                    <FilterBox />
                  </HeadCell>
                ))}
              </HeadRow>
              {entries.map((e, r) => {
                const [code, doc, cli, lan, ven, val, tipo, venda = "", obs = "", nosso = ""] = e;
                const values = ["", code, doc, cli, lan, ven, val, tipo, venda, "", "", obs, nosso];
                const last = r === entries.length - 1;
                return (
                  <Row key={r} $c="#ff0000" $last={last}>
                    <RowMark $last={last}>{last && <Pointer color="#0000ff" />}</RowMark>
                    {values.map((v, i) => {
                      const right = rightAligned.includes(i);
                      return (
                        <Cell
                          key={i}
                          $w={cols[i][1]}
                          $last={last}
                          $right={right}
                          $fill={i === 0 && negative.includes(r) ? "#800080" : undefined}
                        >
                          <Fitted right={right}>{v}</Fitted>
                        </Cell>
                      );
                    })}
                  </Row>
                );
              })}
              <GridFooter><Total><Fitted right>2.768.718,60</Fitted></Total></GridFooter>
            </GridMain>
            <GridGap />
            <ScrollBar>
              <Chevron up />
              <Thumb />
              <Chevron />
            </ScrollBar>
          </GridPanel>

          <Lower>
            <DetailGrid>
              <DetailHead>
                <DetailHeadCell $w={12} />
                {detail.map(([name, w]) => (
                  <DetailHeadCell key={name} $w={w}><Narrow>{name}</Narrow></DetailHeadCell>
                ))}
              </DetailHead>
              <Row $c="#000">
                <RowMark><Pointer color="#000" /></RowMark>
                {detail.map(([name, w, value, right]) => (
                  <Cell key={name} $w={w} $right={right} $fill="#c0dcc0"><Fitted right={right}>{value}</Fitted></Cell>
                ))}
              </Row>
            </DetailGrid>
            <Form>
              <FormLeft>
                <FieldRow $h={30}>
                  <Field $w={261}><FieldLabel>Endereço</FieldLabel><FieldBox><Fitted>RUA MANOEL DA LUZ</Fitted></FieldBox></Field>
                </FieldRow>
                <FieldRow $h={32} $pl={2}>
                  <Field $w={34} $gap={6}><FieldLabel>Nº</FieldLabel><FieldBox /></Field>
                  <Field $w={129} $gap={8}><FieldLabel>Compl.</FieldLabel><FieldBox /></Field>
                  <Field $w={82}><FieldLabel>Telefone</FieldLabel><FieldBox><Fitted>(44) 3288-2630</Fitted></FieldBox></Field>
                </FieldRow>
                <FieldRow $h={30} $pl={1}>
                  <Field $w={125} $gap={3}><FieldLabel>Cidade</FieldLabel><FieldBox $pl={2}><Fitted>SARANDI</Fitted></FieldBox></Field>
                  <Field $w={18} $gap={5}><FieldLabel $pl={2}>UF</FieldLabel><FieldBox><Fitted>PR</Fitted></FieldBox></Field>
                  <Field $w={110}><FieldLabel>CNPJ</FieldLabel><FieldBox><Fitted>00.000.000/0000-00</Fitted></FieldBox></Field>
                </FieldRow>
              </FormLeft>
              <FormRight>
                <FieldRow $h={62}>
                  <Field $w={312}>
                    <FieldLabel $pl={2}>Observações</FieldLabel>
                    <FieldBox $h={48} $pl={4}>
                      <Fitted>DUPLICATA GERADA A PARTIR DE</Fitted>
                      <Fitted>AGRUPAMENTO/DESMEMBRAMENTO</Fitted>
                      <Fitted>DANIEL LEVOU DOCUMENTAÇÃO PARA TENTAR RECEBER</Fitted>
                    </FieldBox>
                  </Field>
                </FieldRow>
                <FieldRow $h={30}>
                  <Field $w={97} $gap={6}><FieldLabel>Usuário</FieldLabel><FieldBox><Fitted>IMPORTAÇÃO</Fitted></FieldBox></Field>
                  <Field $w={101} $gap={6}><FieldLabel>Portador</FieldLabel><FieldBox /></Field>
                  <Field $w={90}><FieldLabel>Nosso Número</FieldLabel></Field>
                </FieldRow>
              </FormRight>
            </Form>
          </Lower>
          <DialogStatus>
            <StatusPane $w={150} />
            <StatusPane />
          </DialogStatus>
        </Dialog>

        <Highlight />

        <Taskbar>
          {taskIcons.map((t, i) => (
            <Task key={i} $w={t.w} $open={t.open} $active={t.active}>{t.icon}</Task>
          ))}
          <Tray>
            <TrayItem $w={30}>
              <svg width="15" height="16" viewBox="0 0 15 16" fill="none" stroke="#fff" strokeWidth="1.200"><circle cx="10.500" cy="3.500" r="2.800" /><circle cx="5" cy="8" r="2.300" /><path d="M1 15q0-4.500 4-4.500T9 15M8 7.300q2.500-1.500 4.800 0 1.500 1 1.500 3" /></svg>
            </TrayItem>
            <TrayItem $w={29}>
              <svg width="12" height="7" viewBox="0 0 12 7"><path d="M.5 6.500L6 1l5.500 5.500" fill="none" stroke="#fff" strokeWidth="1.200" /></svg>
            </TrayItem>
            <TrayItem $w={22}>
              <svg width="15" height="15" viewBox="0 0 15 15"><circle cx="7.500" cy="7.500" r="7" fill="#7fce35" /><path d="M1.500 6q5-3.500 12 0" fill="none" stroke="#fff" strokeWidth="2" /><circle cx="10" cy="9.500" r="3.800" fill="#d8d8d8" /><path d="M8 9.500l1.500 1.500 2.500-3" fill="none" stroke="#3d7d1c" /></svg>
            </TrayItem>
            <TrayItem $w={25}>
              <svg width="17" height="15" viewBox="0 0 17 15" fill="none" stroke="#fff" strokeWidth="1.100"><path d="M5 2h11v8H3V6M8.500 10v3.500M5 13.500h7M.5 1h4v4h-4zM2.500 5v2.500" /></svg>
            </TrayItem>
            <TrayItem $w={22}>
              <svg width="17" height="14" viewBox="0 0 17 14" fill="none" stroke="#fff" strokeWidth="1.100"><path d="M.5 5h2.500l3-3v10l-3-3H.5z" /><path d="M8 5q1.500 2 0 4" /><path d="M10.500 3.500q2.500 3.500 0 7" stroke="#aaa" /><path d="M13 2q3.500 5 0 10" stroke="#777" /></svg>
            </TrayItem>
            <Clock>15:12</Clock>
            <TrayItem $w={40}>
              <svg width="16" height="16" viewBox="0 0 16 16"><path d="M0 1h16v11.500h-5L8.500 15.500V12.500H0z" fill="#fff" /><path d="M3 4h10M3 6.500h10M3 9h6.500" stroke="#111" strokeWidth="1" /></svg>
            </TrayItem>
            <TrayItem $w={8} />
            <PeekLine />
          </Tray>
        </Taskbar>
      </Desktop>
    </>
  );
}
